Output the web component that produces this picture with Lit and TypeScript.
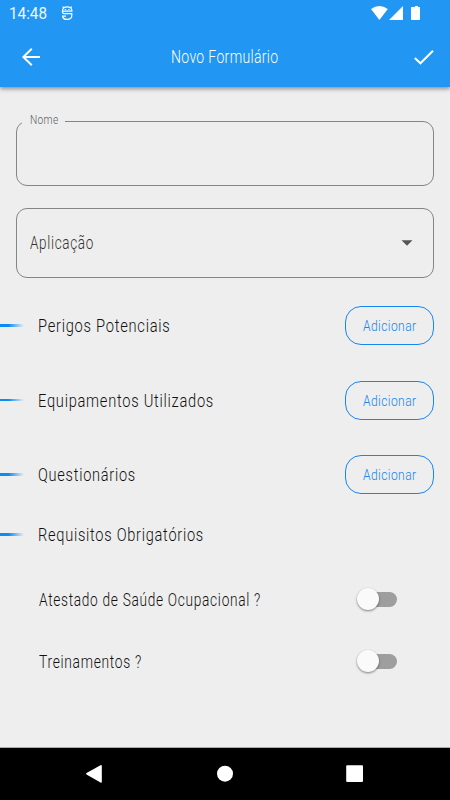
import { LitElement, html, css, svg } from "lit";
import { customElement, property } from "lit/decorators.js";

/** Single line of condensed text, set to a fixed advance width. */
@customElement("condensed-text")
class CondensedText extends LitElement {
  @property() text = "";
  @property({ type: Number }) width = 100;
  @property({ type: Number }) base = 18;

  static styles = css`
    :host { display: block; flex: none; }
    svg { display: block; overflow: visible; }
    text { fill: currentColor; }
  `;

  render() {
    return html`<svg width=${this.width} height="24">
      ${svg`<text x="0" y=${this.base} textLength=${this.width} lengthAdjust="spacingAndGlyphs">${this.text}</text>`}
    </svg>`;
  }
}

@customElement("toggle-switch")
class ToggleSwitch extends LitElement {
  static styles = css`
    :host { display: block; width: 40px; height: 22px; flex: none; position: relative; }
    .track { width: 36px; height: 15px; margin: 4px 0 0 4px; border-radius: 8px; background: #9e9e9e; }
    .thumb {
      position: absolute; left: 0; top: 0; width: 22px; height: 22px; border-radius: 50%;
      background: #fafafa; box-shadow: 0 1px 2px rgba(0, 0, 0, 0.35), 0 1px 3px rgba(0, 0, 0, 0.15);
    }
  `;

  render() {
    return html`<div class="track"></div><div class="thumb"></div>`;
  }
}

@customElement("app-root")
class AppRoot extends LitElement {
  static styles = css`
    :host {
      display: flex; flex-direction: column; width: 450px; height: 800px; overflow: hidden;
      box-sizing: border-box; background: #eeeeee; color: #111;
      font: 300 18px/1 Roboto, "Liberation Sans", sans-serif; letter-spacing: 0.9px;
    }
    svg { display: block; flex: none; }
    header { height: 87px; flex: none; background: #2196f3; color: #fff; box-shadow: 0 2px 4px rgba(0, 0, 0, 0.4); }
    .status { display: flex; height: 28px; align-items: flex-start; }
    .clock { font-weight: 400; font-size: 15.6px; letter-spacing: 0; margin: 2px 14px 0 9px; opacity: 0.93; }
    .signals { margin-left: auto; }
    .bar { display: flex; height: 59px; align-items: center; padding: 0 16px 0 21px; box-sizing: border-box; }
    .title { font-size: 17.6px; letter-spacing: 0.4px; margin: 0 auto 0 130px; }
    main { flex: 1; display: flex; flex-direction: column; }
    .field {
      box-sizing: border-box; margin: 33.5px 16.5px 0 16px; width: 417.5px; height: 65px;
      border: 1px solid #858585; border-radius: 11px; position: relative; flex: none;
    }
    .legend {
      position: absolute; left: 5px; top: -12px; padding: 0 7px 0 7.5px;
      background: #eeeeee; color: #606060; font-size: 13px; letter-spacing: 0.4px;
    }
    .select {
      margin-top: 22.5px; height: 70px; display: flex; align-items: center;
      justify-content: space-between; padding: 0 20px 0 12.5px; color: #333;
    }
    .row { display: flex; align-items: center; padding: 0 16.5px 0 0; height: 39px; flex: none; }
    .row.a { margin-top: 28px; }
    .row.b { margin-top: 35.5px; }
    .row.c { margin-top: 35.5px; }
    .row.d { margin-top: 21px; }
    .dash { width: 24px; height: 2.5px; margin-right: 14px; flex: none; background: linear-gradient(90deg, #0a8cf5 35%, rgba(33, 150, 243, 0) 100%); }
    .add {
      margin-left: auto; box-sizing: border-box; width: 88.5px; height: 39px; border: 1px solid #1687f0;
      border-radius: 16px; display: flex; align-items: center; justify-content: center;
      color: #1687f0; font-size: 15px; letter-spacing: 0.5px;
    }
    .toggle-row { display: flex; align-items: center; justify-content: space-between; height: 24px; flex: none; padding: 0 53.5px 0 39px; }
    .toggle-row.first { margin-top: 33px; }
    .toggle-row.second { margin-top: 37.5px; }
    nav { height: 52px; flex: none; background: #000; border-top: 1px solid #aaa; box-sizing: content-box; margin-top: -1px; }
  `;

  private section(cls: string, text: string, width: number, action: boolean) {
    const shift = cls === "b" ? 0.5 : 0;
    return html`<div class="row ${cls}">
      <div class="dash"></div>
      <condensed-text text=${text} width=${width} base=${18 + shift}></condensed-text>
      ${action
        ? html`<div class="add"><condensed-text text="Adicionar" width="53.5" base=${17.2 + shift}></condensed-text></div>`
        : ""}
    </div>`;
  }

  render() {
    return html`
      <header>
        <div class="status">
          <condensed-text class="clock" text="14:48" width="38" base="17"></condensed-text>
          <svg width="12" height="24" viewBox="61 0 12 24" fill="none" stroke="#fff" stroke-width="1.2">
            <path d="M63.600 8 62.700 6.500M70.800 8l.9-1.500M62.500 11.200V10.500q.4-3.700 4.700-3.700t4.700 3.700v.7ZM62.500 11.200v.8q0 1.700 1.800 1.700h7.500v1.900q0 3.800-4.500 3.800t-4.700-3.300H66" />
            <path d="M64.800 9.500h1.400M68.300 9.500h1.400" />
          </svg>
          <svg class="signals" width="80" height="28" viewBox="370 0 80 28" fill="#fff">
            <path d="M371 9q8.400-6.200 16.800 0L379.400 20ZM403 6v14h-14ZM413 7h2V6h3v1h1.200q.8 0 .8.800v11.400q0 .8-.8.800h-7.400q-.8 0-.8-.8V7.800q0-.8.8-.8Z" />
          </svg>
        </div>
        <div class="bar">
          <svg width="20" height="20" viewBox="21 48 20 20" fill="none" stroke="#fff" stroke-width="1.900">
            <path d="M40 57H23.500M31.800 48.700 23.300 57l8.500 8.300" />
          </svg>
          <condensed-text class="title" text="Novo Formulário" width="107.5" base="17.400"></condensed-text>
          <svg width="20" height="20" viewBox="414 48 20 20" fill="none" stroke="#fff" stroke-width="2">
            <path d="m414.800 58 5.600 5.300L433 50.800" />
          </svg>
        </div>
      </header>
      <main>
        <div class="field">
          <div class="legend"><condensed-text text="Nome" width="28.5" base="14.400"></condensed-text></div>
        </div>
        <div class="field select">
          <condensed-text text="Aplicação" width="64" base="17.500"></condensed-text>
          <svg width="12" height="6" viewBox="0 0 12 6"><path d="M.5.200h11L6 5.700Z" fill="#555" /></svg>
        </div>
        ${this.section("a", "Perigos Potenciais", 132.5, true)}
        ${this.section("b", "Equipamentos Utilizados", 176, true)}
        ${this.section("c", "Questionários", 98, true)}
        ${this.section("d", "Requisitos Obrigatórios", 166, false)}
        <div class="toggle-row first">
          <condensed-text text="Atestado de Saúde Ocupacional ?" width="222" base="18.500"></condensed-text>
          <toggle-switch></toggle-switch>
        </div>
        <div class="toggle-row second">
          <condensed-text text="Treinamentos ?" width="103" base="18.500"></condensed-text>
          <toggle-switch></toggle-switch>
        </div>
      </main>
      <nav>
        <svg width="450" height="52" viewBox="0 748 450 52" fill="#fff">
          <path d="M86.500 773 100.500 765.200q1.300-.6 1.300.8v15.700q0 1.500-1.300.8L86.500 774.600q-.8-.8 0-1.600Z" />
          <circle cx="225" cy="773.700" r="8" />
          <rect x="346.200" y="765.300" width="16.800" height="16.700" rx="1" />
        </svg>
      </nav>
    `;
  }
}
